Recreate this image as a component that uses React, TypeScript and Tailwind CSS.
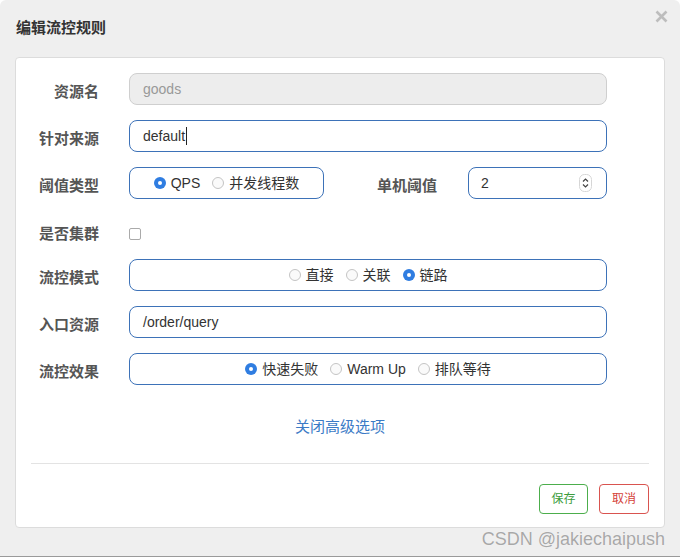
const FONT = "font-['Liberation_Sans','Noto_Sans_CJK_SC',sans-serif]";

function Radio({ checked, label }: { checked?: boolean; label: string }) {
  return (
    <span className="inline-flex items-center mx-[6px]">
      {checked ? (
        <span className="w-[12px] h-[12px] rounded-full bg-[#2f7de1] flex items-center justify-center">
          <span className="w-[4px] h-[4px] rounded-full bg-white" />
        </span>
      ) : (
        <span className="w-[12px] h-[12px] rounded-full border border-[#c4c4c4] bg-[#fafafa]" />
      )}
      <span className="ml-[5px] text-[14px] text-[#333]">{label}</span>
    </span>
  );
}

function Label({ text, w = 'w-[83px]' }: { text: string; w?: string }) {
  return (
    <div className={`${w} shrink-0 h-[32px] flex items-center justify-end pt-[6px] text-[15px] font-bold text-[#555]`}>
      {text}
    </div>
  );
}

function Spinner() {
  return (
    <svg width="13" height="18" viewBox="0 0 13 18" className="mr-[14px]">
      <rect x="0.5" y="0.5" width="12" height="17" rx="5" fill="#fff" stroke="#d6d6d6" />
      <path d="M4 7.5 L6.5 5 L9 7.5" fill="none" stroke="#444" strokeWidth="1.2" />
      <path d="M4 10.5 L6.5 13 L9 10.5" fill="none" stroke="#444" strokeWidth="1.2" />
    </svg>
  );
}

export default function App() {
  const box = 'h-[32px] rounded-[8px] border border-[#3d72b8] bg-white flex items-center';
  return (
    <div className={`${FONT} w-[680px] h-[557px] bg-[#efefef] rounded-t-[6px] border-b border-[#9a9a9a] flex flex-col`}>
      <div className="h-[57px] shrink-0 flex justify-between pl-[16px] pr-[12px]">
        <h1 className="mt-[17px] text-[15px] font-bold text-[#333]">编辑流控规则</h1>
        <svg width="13" height="13" viewBox="0 0 13 13" className="mt-[10px]">
          <path d="M1.5 1.5 L11.5 11.5 M11.5 1.5 L1.5 11.5" stroke="#bdbdbd" strokeWidth="2.6" />
        </svg>
      </div>

      <div className="mx-[15px] h-[471px] shrink-0 bg-white border border-[#dcdcdc] rounded-[4px] flex flex-col pt-[15px]">
        <div className="flex">
          <Label text="资源名" />
          <div className="ml-[30px] w-[478px] h-[32px] rounded-[8px] border border-[#cfcfcf] bg-[#ededed] flex items-center pl-[13px] text-[14px] text-[#999]">
            goods
          </div>
        </div>

        <div className="flex mt-[15px]">
          <Label text="针对来源" />
          <div className={`${box} ml-[30px] w-[478px] pl-[13px] text-[14px] text-[#333]`}>
            default<span className="w-px h-[18px] bg-[#222] ml-[1px]" />
          </div>
        </div>

        <div className="flex mt-[15px]">
          <Label text="阈值类型" />
          <div className={`${box} ml-[30px] w-[195px] justify-center`}>
            <Radio checked label="QPS" />
            <Radio label="并发线程数" />
          </div>
          <Label text="单机阈值" w="w-[113px]" />
          <div className={`${box} ml-[31px] w-[139px] justify-between pl-[12px] text-[14px] text-[#333]`}>
            2
            <Spinner />
          </div>
        </div>

        <div className="flex mt-[16px] h-[32px]">
          <Label text="是否集群" />
          <div className="ml-[30px] pt-[13px]">
            <div className="w-[12px] h-[12px] rounded-[2px] border border-[#aaa] bg-white" />
          </div>
        </div>

        <div className="flex mt-[12px]">
          <Label text="流控模式" />
          <div className={`${box} ml-[30px] w-[478px] justify-center`}>
            <Radio label="直接" />
            <Radio label="关联" />
            <Radio checked label="链路" />
          </div>
        </div>

        <div className="flex mt-[15px]">
          <Label text="入口资源" />
          <div className={`${box} ml-[30px] w-[478px] pl-[13px] text-[14px] text-[#333]`}>/order/query</div>
        </div>

        <div className="flex mt-[15px]">
          <Label text="流控效果" />
          <div className={`${box} ml-[30px] w-[478px] justify-center`}>
            <Radio checked label="快速失败" />
            <Radio label="Warm Up" />
            <Radio label="排队等待" />
          </div>
        </div>

        <div className="mt-[32px] h-[20px] text-center text-[15px] leading-[20px] text-[#3b7bc6]">关闭高级选项</div>

        <div className="mt-[26px] mx-[15px] border-t border-[#e3e3e3]" />

        <div className="mt-[20px] mr-[15px] flex justify-end gap-[11px]">
          <button className="w-[49px] h-[30px] rounded-[4px] border border-[#4cae4c] text-[12px] text-[#3d9c3d] bg-white">保存</button>
          <button className="w-[50px] h-[30px] rounded-[4px] border border-[#d9534f] text-[12px] text-[#d43f3a] bg-white">取消</button>
        </div>
      </div>

      <div className="pr-[15px] text-right text-[18px] leading-[20px] mt-[1px] text-[#a8a8a8] [text-shadow:0_0_1px_#fff]">
        CSDN @jakiechaipush
      </div>
    </div>
  );
}
